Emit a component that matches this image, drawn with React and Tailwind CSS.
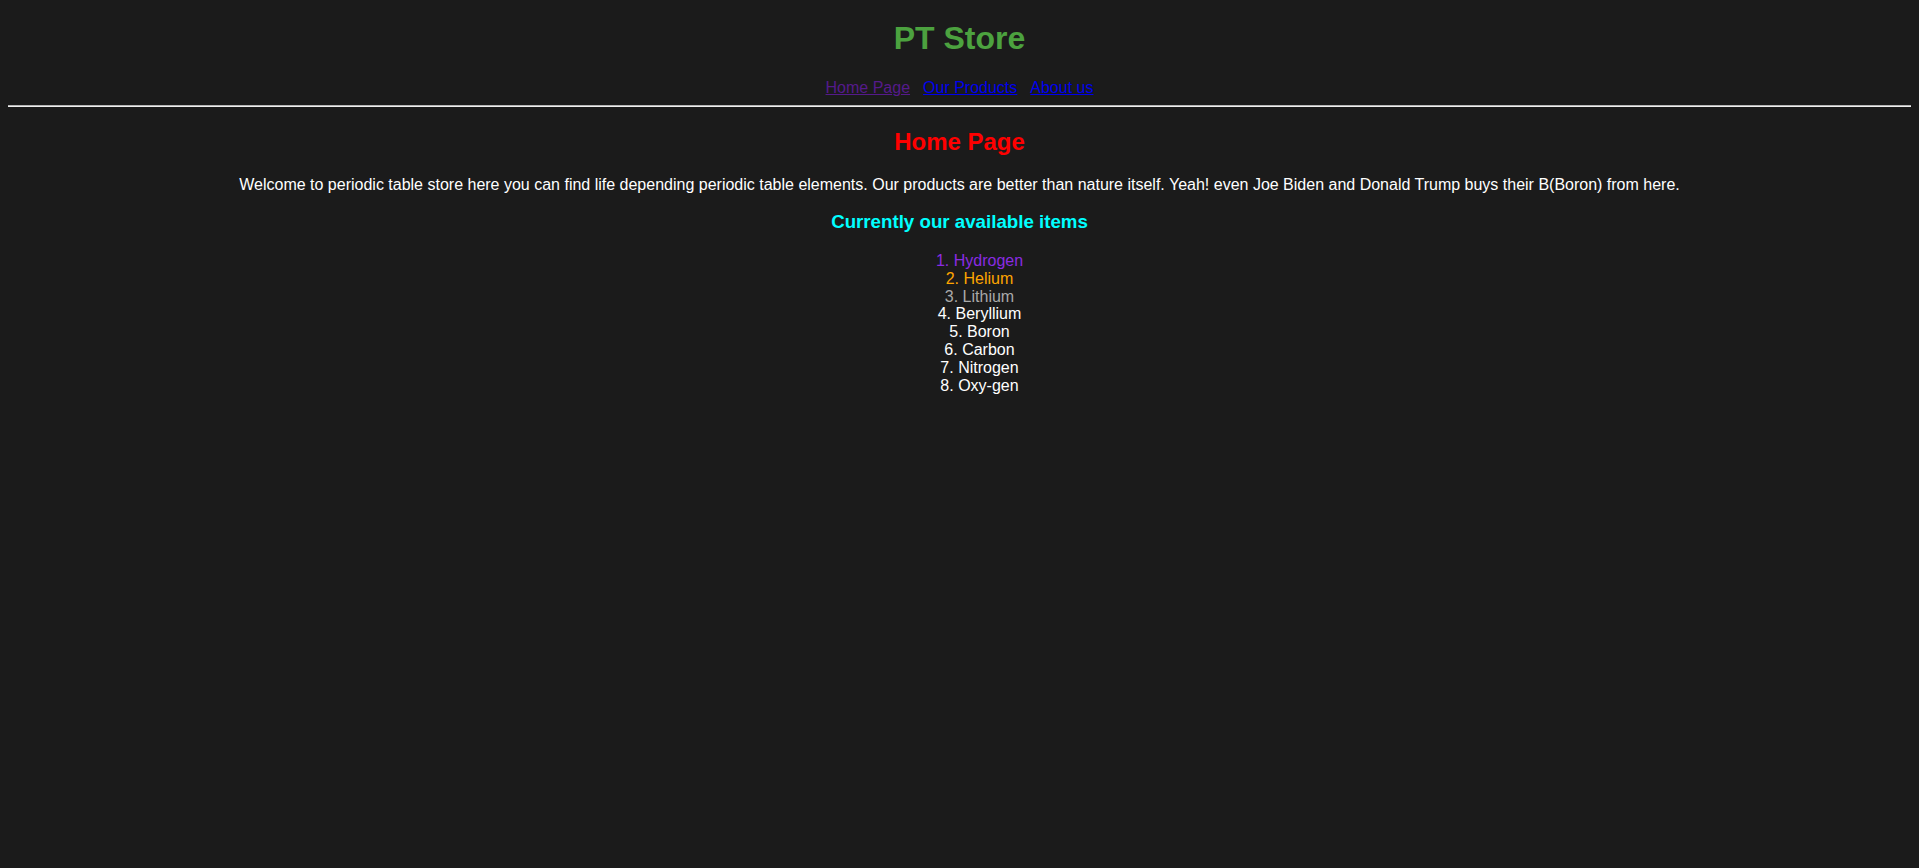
import React from 'react';

const items = [
  { name: 'Hydrogen', color: 'text-[#8a2be2]' },
  { name: 'Helium', color: 'text-[#ffa500]' },
  { name: 'Lithium', color: 'text-[#a9a9a9]' },
  { name: 'Beryllium', color: 'text-white' },
  { name: 'Boron', color: 'text-white' },
  { name: 'Carbon', color: 'text-white' },
  { name: 'Nitrogen', color: 'text-white' },
  { name: 'Oxy-gen', color: 'text-white' },
];

export default function App() {
  return (
    <div className="min-h-screen bg-[#1b1b1b] px-2 pt-[21.44px] text-white font-['Liberation_Sans',Arial,sans-serif] text-base leading-[1.117] text-center flow-root">
      {/* Header */}
      <h1 className="text-[32px] leading-[1.117] font-bold text-[#4ca23f] mb-[21.44px]">PT Store</h1>
      <nav className="flex justify-center gap-[13px]">
        <a href="#" className="underline text-[#551a8b]">Home Page</a>
        <a href="#" className="underline text-[#0000ee]">Our Products</a>
        <a href="#" className="underline text-[#0000ee]">About us</a>
      </nav>
      <hr className="mt-[9px] mb-2 h-0 border-t border-b border-t-[#b4b4b4] border-b-[#eeeeee]" />

      {/* Content */}
      <h2 className="text-2xl leading-[1.117] font-bold text-[#ff0000] mt-[21.5px] mb-[19.92px]">Home Page</h2>
      <p className="my-4">
        Welcome to periodic table store here you can find life depending periodic table elements. Our products are better than nature itself. Yeah! even Joe Biden and Donald Trump buys their B(Boron) from here.
      </p>
      <h3 className="text-[18.72px] leading-[1.117] font-bold text-[#00ffff] my-[18.72px]">Currently our available items</h3>
      <ol className="list-decimal list-inside pl-10 my-4">
        {items.map((item) => (
          <li key={item.name} className={item.color}>{item.name}</li>
        ))}
      </ol>
    </div>
  );
}
